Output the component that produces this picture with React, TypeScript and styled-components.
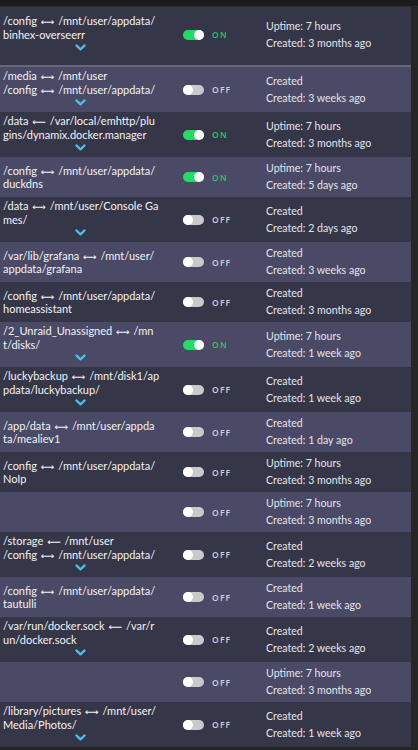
import React from 'react';
import styled, { createGlobalStyle } from 'styled-components';

const GlobalStyle = createGlobalStyle`
  html, body {
    margin: 0;
    padding: 0;
    background: #1f1f1f;
  }
  body {
    font-family: Lato, "Open Sans", "DejaVu Sans", sans-serif;
    -webkit-font-smoothing: antialiased;
  }
`;

const Page = styled.div`
  width: 418px;
  height: 750px;
  overflow: hidden;
  background: #1f1f1f;
  display: flex;
  flex-direction: column;
`;

const TopBar = styled.div`
  height: 7px;
  flex-shrink: 0;
  background: #1c1c1c;
  border-bottom: 1px solid #2c2c2c;
  box-sizing: border-box;
`;

const Body = styled.div`
  display: flex;
  flex: 1;
  background: #252525;
`;

const List = styled.div`
  width: 411px;
  display: flex;
  flex-direction: column;
`;

const Row = styled.div<{ $alt: boolean; $tall?: boolean }>`
  display: flex;
  align-items: center;
  min-height: ${(p) => (p.$tall ? 60 : 40)}px;
  background: ${(p) => (p.$alt ? '#4a4a67' : '#363649')};
  border-bottom: ${(p) => (p.$tall ? '2px solid #66667c' : 'none')};
  box-sizing: border-box;
  padding-bottom: ${(p) => (p.$tall ? 3 : 0)}px;
`;

const Volumes = styled.div`
  width: 154px;
  padding: 2px 0 2px 3px;
  flex-shrink: 0;
  display: flex;
  flex-direction: column;
`;

const VolumeLine = styled.div`
  font-size: 11px;
  line-height: 13.5px;
  height: 13.5px;
  color: #f2f2f4;
  white-space: nowrap;
`;

// the mapping arrow between container path and host path
const Arrow = styled.span`
  font-family: "DejaVu Sans", sans-serif;
  font-size: 9.5px;
  line-height: 0;
  margin: 0 1px;
`;

const Expand = styled.div`
  height: 12px;
  display: flex;
  align-items: center;
  justify-content: center;
  color: #4cbfe6;
  margin-bottom: 2px;
`;

const StateCell = styled.div`
  width: 109px;
  flex-shrink: 0;
  display: flex;
  align-items: center;
  padding-left: 26px;
  box-sizing: border-box;
  margin-left: auto;
  align-self: stretch;
`;

const Switch = styled.div<{ $on: boolean }>`
  position: relative;
  width: 21px;
  height: 10px;
  border-radius: 5px;
  background: ${(p) => (p.$on ? '#21dc63' : '#c9c9cc')};
  flex-shrink: 0;

  &::after {
    content: '';
    position: absolute;
    top: 0;
    left: ${(p) => (p.$on ? '11px' : '0')};
    width: 10px;
    height: 10px;
    border-radius: 50%;
    background: #ffffff;
  }
`;

const StateLabel = styled.span<{ $on: boolean }>`
  margin-left: 8px;
  font-family: "Open Sans", sans-serif;
  font-size: 8.5px;
  font-weight: 600;
  letter-spacing: 1.2px;
  color: ${(p) => (p.$on ? '#25c964' : '#d2d2d6')};
`;

const Status = styled.div`
  flex: 1;
  display: flex;
  flex-direction: column;
  justify-content: center;
`;

const StatusLine = styled.div`
  font-size: 10.6px;
  line-height: 17px;
  color: #e4e4e8;
  white-space: nowrap;
`;

const RightGutter = styled.div`
  flex: 1;
  background: #262626;
`;

const Chevron = () => (
  <svg width="11" height="7" viewBox="0 0 11 7" fill="none">
    <path d="M1.4 1.4 L5.5 5.4 L9.6 1.4" stroke="currentColor" strokeWidth="2.2" strokeLinecap="round" strokeLinejoin="round" />
  </svg>
);

type Container = {
  volumes: string[];
  more?: boolean;
  on: boolean;
  uptime: boolean;
  created: string;
};

const containers: Container[] = [
  { volumes: ['/config ↔ /mnt/user/appdata/', 'binhex-overseerr'], more: true, on: true, uptime: true, created: '3 months ago' },
  { volumes: ['/media ↔ /mnt/user', '/config ↔ /mnt/user/appdata/'], more: true, on: false, uptime: false, created: '3 weeks ago' },
  { volumes: ['/data ← /var/local/emhttp/plu', 'gins/dynamix.docker.manager'], more: true, on: true, uptime: true, created: '3 months ago' },
  { volumes: ['/config ↔ /mnt/user/appdata/', 'duckdns'], on: true, uptime: true, created: '5 days ago' },
  { volumes: ['/data ↔ /mnt/user/Console Ga', 'mes/'], more: true, on: false, uptime: false, created: '2 days ago' },
  { volumes: ['/var/lib/grafana ↔ /mnt/user/', 'appdata/grafana'], on: false, uptime: false, created: '3 weeks ago' },
  { volumes: ['/config ↔ /mnt/user/appdata/', 'homeassistant'], on: false, uptime: false, created: '3 months ago' },
  { volumes: ['/2_Unraid_Unassigned ↔ /mn', 't/disks/'], more: true, on: true, uptime: true, created: '1 week ago' },
  { volumes: ['/luckybackup ↔ /mnt/disk1/ap', 'pdata/luckybackup/'], more: true, on: false, uptime: false, created: '1 week ago' },
  { volumes: ['/app/data ↔ /mnt/user/appda', 'ta/mealiev1'], on: false, uptime: false, created: '1 day ago' },
  { volumes: ['/config ↔ /mnt/user/appdata/', 'NoIp'], on: false, uptime: true, created: '3 months ago' },
  { volumes: [], on: false, uptime: true, created: '3 months ago' },
  { volumes: ['/storage ← /mnt/user', '/config ↔ /mnt/user/appdata/'], more: true, on: false, uptime: false, created: '2 weeks ago' },
  { volumes: ['/config ↔ /mnt/user/appdata/', 'tautulli'], on: false, uptime: false, created: '1 week ago' },
  { volumes: ['/var/run/docker.sock ← /var/r', 'un/docker.sock'], more: true, on: false, uptime: false, created: '2 weeks ago' },
  { volumes: [], on: false, uptime: true, created: '3 months ago' },
  { volumes: ['/library/pictures ↔ /mnt/user/', 'Media/Photos/'], more: true, on: false, uptime: false, created: '1 week ago' },
];

// split a mapping line so the arrow can be drawn in its own font
const renderVolume = (line: string) => {
  const m = line.match(/^(.*?) ([↔←]) (.*)$/);
  if (!m) return line;
  return (
    <>
      {m[1]} <Arrow>{m[2] === '↔' ? '⟷' : '⟵'}</Arrow> {m[3]}
    </>
  );
};

const App: React.FC = () => (
  <>
    <GlobalStyle />
    <Page>
      <TopBar />
      <Body>
        <List>
          {containers.map((c, i) => (
            <Row key={i} $alt={i % 2 === 1} $tall={i === 0}>
              <Volumes>
                {c.volumes.map((v) => (
                  <VolumeLine key={v}>{renderVolume(v)}</VolumeLine>
                ))}
                {c.more && (
                  <Expand>
                    <Chevron />
                  </Expand>
                )}
              </Volumes>
              <StateCell>
                <Switch $on={c.on} />
                <StateLabel $on={c.on}>{c.on ? 'ON' : 'OFF'}</StateLabel>
              </StateCell>
              <Status>
                <StatusLine>{c.uptime ? 'Uptime: 7 hours' : 'Created'}</StatusLine>
                <StatusLine>Created: {c.created}</StatusLine>
              </Status>
            </Row>
          ))}
        </List>
        <RightGutter />
      </Body>
    </Page>
  </>
);

export default App;
